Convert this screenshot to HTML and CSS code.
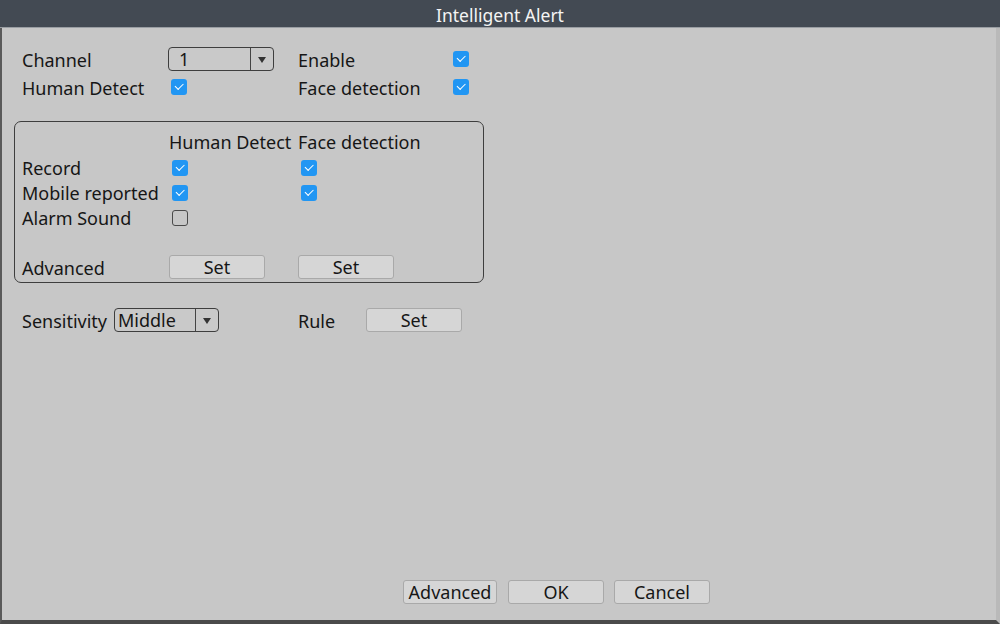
FILE: index.html
```html
<!DOCTYPE html>
<html>
<head>
<meta charset="utf-8">
<link rel="stylesheet" href="styles.css">
</head>
<body>
<div class="window">
  <div class="titlebar">Intelligent Alert</div>
  <div class="content">
    <div class="top">
      <div class="row">
        <span class="lbl c1">Channel</span>
        <div class="c2"><div class="select sel-ch"><span class="val">1</span><span class="arrow"></span></div></div>
        <span class="lbl c3">Enable</span>
        <span class="cb on"></span>
      </div>
      <div class="row">
        <span class="lbl c1">Human Detect</span>
        <div class="c2"><span class="cb on nudge"></span></div>
        <span class="lbl c3">Face detection</span>
        <span class="cb on"></span>
      </div>
    </div>

    <div class="group">
      <div class="grow">
        <span class="g1"></span>
        <span class="lbl g2">Human Detect</span>
        <span class="lbl g3">Face detection</span>
      </div>
      <div class="grow">
        <span class="lbl g1">Record</span>
        <div class="g2"><span class="cb on nudge"></span></div>
        <div class="g3"><span class="cb on nudge"></span></div>
      </div>
      <div class="grow">
        <span class="lbl g1">Mobile reported</span>
        <div class="g2"><span class="cb on nudge"></span></div>
        <div class="g3"><span class="cb on nudge"></span></div>
      </div>
      <div class="grow">
        <span class="lbl g1">Alarm Sound</span>
        <div class="g2"><span class="cb nudge"></span></div>
      </div>
      <div class="grow"></div>
      <div class="grow">
        <span class="lbl g1">Advanced</span>
        <div class="g2"><button class="btn">Set</button></div>
        <div class="g3"><button class="btn">Set</button></div>
      </div>
    </div>

    <div class="row sens">
      <span class="lbl s1">Sensitivity</span>
      <div class="s2"><div class="select sel-sens"><span class="val">Middle</span><span class="arrow"></span></div></div>
      <span class="lbl s3">Rule</span>
      <button class="btn">Set</button>
    </div>

    <div class="footer">
      <button class="btn fbtn adv">Advanced</button>
      <button class="btn fbtn">OK</button>
      <button class="btn fbtn">Cancel</button>
    </div>
  </div>
</div>
</body>
</html>
```

FILE: styles.css
```css
* { box-sizing: border-box; }
html, body {
  margin: 0;
  padding: 0;
  width: 1000px;
  height: 624px;
  overflow: hidden;
  background: #c7c7c7;
  font-family: "Noto Sans", "Open Sans", sans-serif;
  font-size: 18px;
  color: #161616;
}
.window {
  width: 1000px;
  height: 624px;
  display: flex;
  flex-direction: column;
}
.titlebar {
  height: 28px;
  flex: none;
  background: #434a53;
  color: #f4f4f4;
  text-align: center;
  line-height: 31px;
  font-size: 17.5px;
  border-bottom: 1px solid #9a9ea3;
}
.content {
  flex: 1;
  display: flex;
  flex-direction: column;
  background: #c7c7c7;
  border-left: 2px solid #5a5a5a;
  border-right: 4px solid #b9b9b9;
  border-bottom: 4px solid #4b4b4b;
  padding: 19px 0 0 0;
}
.top {
  display: flex;
  flex-direction: column;
  gap: 4px;
  padding-left: 20px;
}
.row {
  display: flex;
  align-items: center;
  height: 24px;
}
.lbl { white-space: nowrap; line-height: 24px; padding-top: 1px; }
.c1 { width: 146px; }
.c2 { width: 130px; display: flex; align-items: center; }
.c3 { width: 155px; }
.nudge { margin-left: 3px; }

.cb {
  display: inline-block;
  width: 16px;
  height: 16px;
  border-radius: 3px;
  border: 1.5px solid #4a4a4a;
  position: relative;
  flex: none;
}
.cb.on {
  background: #2196f3;
  border: none;
}
.cb.on::after {
  content: "";
  position: absolute;
  left: 4px;
  top: 4px;
  width: 7px;
  height: 3.5px;
  border-left: 1.6px solid #fff;
  border-bottom: 1.6px solid #fff;
  transform: rotate(-45deg);
}

.select {
  display: flex;
  height: 24px;
  border: 1px solid #3e3e3e;
  border-radius: 4px;
  background: #c9c9c9;
}
.sel-ch { width: 106px; }
.sel-sens { width: 105px; }
.select .val {
  flex: 1;
  padding-left: 10px;
  line-height: 23px;
  font-size: 18px;
}
.sel-sens .val { padding-left: 3px; }
.select .arrow {
  width: 23px;
  border-left: 1px solid #444;
  position: relative;
}
.select .arrow::after {
  content: "";
  position: absolute;
  left: 7px;
  top: 9px;
  border-left: 4px solid transparent;
  border-right: 4px solid transparent;
  border-top: 6px solid #333;
}

.group {
  margin: 22px 0 0 12px;
  width: 470px;
  height: 162px;
  border: 1px solid #3e3e3e;
  border-radius: 7px;
  padding: 7px 0 0 7px;
  display: flex;
  flex-direction: column;
}
.grow {
  display: flex;
  align-items: center;
  height: 25px;
}
.grow:first-child { margin-bottom: 1px; }
.grow:last-child { height: 24px; }
.g1 { width: 147px; }
.g2 { width: 129px; display: flex; align-items: center; }
.g3 { display: flex; align-items: center; }

.btn {
  font-family: inherit;
  font-size: 18px;
  color: #161616;
  height: 24px;
  width: 96px;
  padding: 0;
  background: #d6d6d6;
  border: 1px solid #a9a9a9;
  border-radius: 3px;
  line-height: 20px;
}

.sens {
  margin-top: 25px;
  padding-left: 20px;
}
.s1 { width: 92px; }
.s2 { width: 184px; }
.s3 { width: 68px; }

.footer {
  margin-top: auto;
  margin-bottom: 16px;
  display: flex;
  gap: 11px;
  padding-left: 401px;
}
.fbtn { width: 96px; }
.fbtn.adv { width: 94px; }
.footer .fbtn:nth-child(3) { margin-left: -1px; }
```
